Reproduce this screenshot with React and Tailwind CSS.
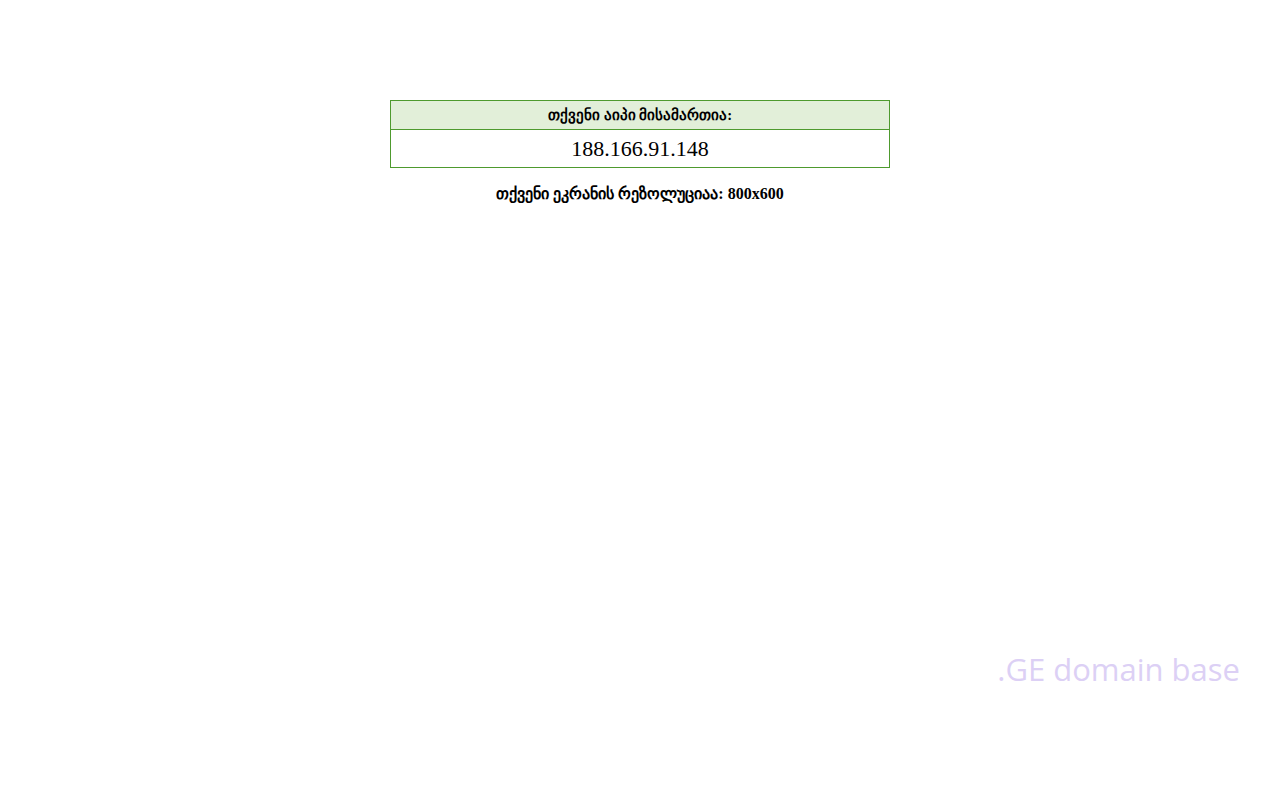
import React from 'react';

// Simple IP / screen info page
const App = () => {
  return (
    <div className="relative min-h-[800px] bg-white font-['Liberation_Serif',serif] text-black">
      <div className="pt-[100px] flex flex-col items-center">
        <table className="w-[500px] border-collapse border border-[#4e9a2e]">
          <tbody>
            <tr>
              <td className="h-[29px] bg-[#e2efd9] border border-[#4e9a2e] text-center text-[14.6px] font-bold leading-none">
                თქვენი აიპი მისამართია:
              </td>
            </tr>
            <tr>
              <td className="h-[38px] border border-[#4e9a2e] text-center text-[22px] leading-none">
                188.166.91.148
              </td>
            </tr>
          </tbody>
        </table>
        <p className="mt-[14px] text-[16px] font-bold">
          თქვენი ეკრანის რეზოლუციაა: 800x600
        </p>
      </div>

      {/* watermark */}
      <div className="absolute right-[40px] top-[646px] font-['Open_Sans',sans-serif] text-[31px] text-[#dcd0f5]">
        .GE domain base
      </div>
    </div>
  );
};

export default App;
